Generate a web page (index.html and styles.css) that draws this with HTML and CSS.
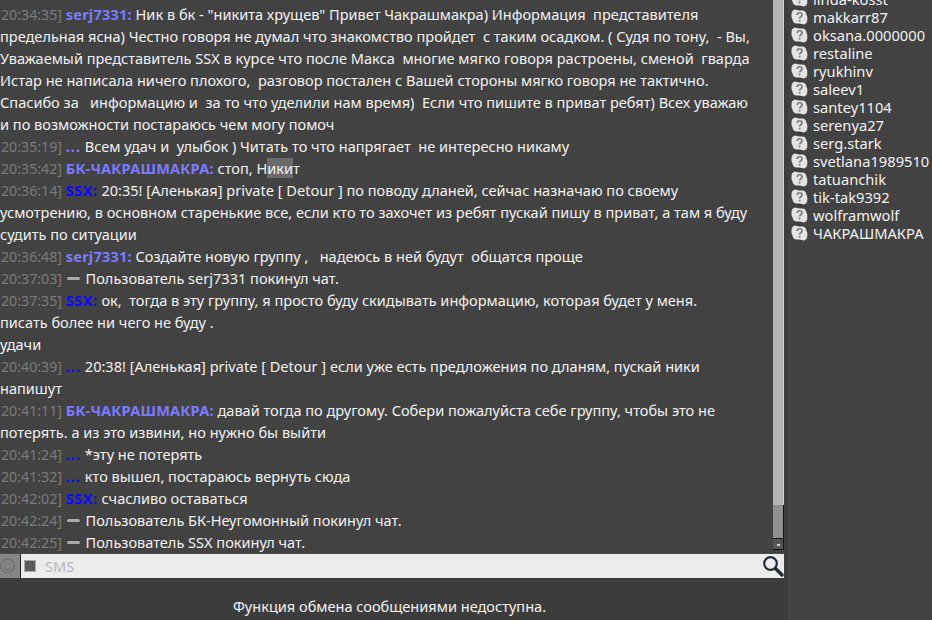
FILE: index.html
```html
<!DOCTYPE html>
<html lang="ru">
<head>
    <meta charset="UTF-8">
    <title>Chat</title>
    <link rel="stylesheet" href="styles.css">
</head>
<body>
    <div class="main">
        <div class="chat-area">
            <div class="messages">
                <div class="msg"><span class="time">20:34:35]</span> <b class="nick-a">serj7331:</b> Ник в бк - "никита хрущев" Привет Чакрашмакра) Информация&nbsp; представителя<br>предельная ясна) Честно говоря не думал что знакомство пройдет&nbsp; с таким осадком. ( Судя по тону,&nbsp; - Вы,<br>Уважаемый представитель SSX в курсе что после Макса&nbsp; многие мягко говоря растроены, сменой&nbsp; гварда<br>Истар не написала ничего плохого,&nbsp; разговор постален с Вашей стороны мягко говоря не тактично.<br>Спасибо за &nbsp;&nbsp;информацию и&nbsp; за то что уделили нам время)&nbsp; Если что пишите в приват ребят) Всех уважаю<br>и по возможности постараюсь чем могу помоч</div>
                <div class="msg"><span class="time">20:35:19]</span> <b class="nick-a dots">...</b> Всем удач и&nbsp; улыбок ) Читать то что напрягает&nbsp; не интересно никаму</div>
                <div class="msg"><span class="time">20:35:42]</span> <b class="nick-a">БК-ЧАКРАШМАКРА:</b> стоп, Н<span class="sel">ики</span>т</div>
                <div class="msg"><span class="time">20:36:14]</span> <b class="nick-b">SSX:</b> 20:35! [Аленькая] private [ Detour ] по поводу дланей, сейчас назначаю по своему<br>усмотрению, в основном старенькие все, если кто то захочет из ребят пускай пишу в приват, а там я буду<br>судить по ситуации</div>
                <div class="msg"><span class="time">20:36:48]</span> <b class="nick-a">serj7331:</b> Создайте новую группу ,&nbsp;&nbsp; надеюсь в ней будут&nbsp; общатся проще</div>
                <div class="msg"><span class="time">20:37:03]</span> <i class="dash"></i> Пользователь serj7331 покинул чат.</div>
                <div class="msg"><span class="time">20:37:35]</span> <b class="nick-b">SSX:</b> ок,&nbsp; тогда в эту группу, я просто буду скидывать информацию, которая будет у меня.<br>писать более ни чего не буду .<br>удачи</div>
                <div class="msg"><span class="time">20:40:39]</span> <b class="nick-b dots">...</b> 20:38! [Аленькая] private [ Detour ] если уже есть предложения по дланям, пускай ники<br>напишут</div>
                <div class="msg"><span class="time">20:41:11]</span> <b class="nick-a">БК-ЧАКРАШМАКРА:</b> давай тогда по другому. Собери пожалуйста себе группу, чтобы это не<br>потерять. а из это извини, но нужно бы выйти</div>
                <div class="msg"><span class="time">20:41:24]</span> <b class="nick-b dots">...</b> *эту не потерять</div>
                <div class="msg"><span class="time">20:41:32]</span> <b class="nick-b dots">...</b> кто вышел, постараюсь вернуть сюда</div>
                <div class="msg"><span class="time">20:42:02]</span> <b class="nick-b">SSX:</b> счасливо оставаться</div>
                <div class="msg"><span class="time">20:42:24]</span> <i class="dash"></i> Пользователь БК-Неугомонный покинул чат.</div>
                <div class="msg"><span class="time">20:42:25]</span> <i class="dash"></i> Пользователь SSX покинул чат.</div>
            </div>
            <div class="scrollbar">
                <div class="thumb"></div>
                <div class="sb-btn"></div>
                <div class="sb-btn small"><i class="sb-mark"></i></div>
            </div>
        </div>
        <div class="input-row">
            <div class="smile">
                <svg width="18" height="18" viewBox="0 0 18 18" fill="none" stroke="#6c6c6c" stroke-width="1.100"><circle cx="7.500" cy="9" r="6.800"/><path d="M4 10.800c1.800 2.800 5.200 2.800 7 0"/><path d="M5 7h1M9 7h1" stroke-width="1.600"/></svg>
            </div>
            <div class="input-box">
                <span class="square"></span>
                <span class="placeholder">SMS</span>
                <svg class="search" width="22" height="22" viewBox="0 0 22 22" fill="none"><circle cx="8.500" cy="8.500" r="6.300" stroke="#232b38" stroke-width="2.200"/><path d="M13.500 13.500l6.500 6.500" stroke="#232b38" stroke-width="3.400" stroke-linecap="round"/></svg>
            </div>
        </div>
        <p class="notice">Функция обмена сообщениями недоступна.</p>
    </div>
    <div class="sidebar">
        <div class="user-list">
            <div class="user"><svg class="q"><use href="#q-icon"/></svg>linda-kosst</div>
            <div class="user"><svg class="q"><use href="#q-icon"/></svg>makkarr87</div>
            <div class="user"><svg class="q"><use href="#q-icon"/></svg>oksana.0000000</div>
            <div class="user"><svg class="q"><use href="#q-icon"/></svg>restaline</div>
            <div class="user"><svg class="q"><use href="#q-icon"/></svg>ryukhinv</div>
            <div class="user"><svg class="q"><use href="#q-icon"/></svg>saleev1</div>
            <div class="user"><svg class="q"><use href="#q-icon"/></svg>santey1104</div>
            <div class="user"><svg class="q"><use href="#q-icon"/></svg>serenya27</div>
            <div class="user"><svg class="q"><use href="#q-icon"/></svg>serg.stark</div>
            <div class="user"><svg class="q"><use href="#q-icon"/></svg>svetlana1989510</div>
            <div class="user"><svg class="q"><use href="#q-icon"/></svg>tatuanchik</div>
            <div class="user"><svg class="q"><use href="#q-icon"/></svg>tik-tak9392</div>
            <div class="user"><svg class="q"><use href="#q-icon"/></svg>wolframwolf</div>
            <div class="user"><svg class="q"><use href="#q-icon"/></svg>ЧАКРАШМАКРА</div>
        </div>
    </div>
    <svg class="defs" width="0" height="0">
        <symbol id="q-icon" viewBox="0 0 16 16">
            <path d="M3.500.5c1.500 0 2.500 1 4 1h3.500c1.800 0 3.200 1.200 3.600 3 .3 1.500 1.200 2.500 1.200 4v2.500c0 2.300-1.500 4.500-3.500 4.500-1.500 0-2.500-1-4-1h-3.300c-1.800 0-3.300-1.200-3.700-3-.3-1.500-1.300-2.500-1.300-4v-2.500c0-2.300 1.500-4.500 3.500-4.500z" fill="#e4e4e4"/>
            <path d="M5.700 6c0-3 4.800-3 4.800 0 0 1.800-2.400 1.800-2.400 3.600M8.100 10.800v1.800" fill="none" stroke="#7c7c7c" stroke-width="1.700"/>
        </symbol>
    </svg>
</body>
</html>
```

FILE: styles.css
```css
html, body {
    height: 100%;
}
body {
    margin: 0;
    width: 932px;
    height: 620px;
    overflow: hidden;
    display: flex;
    background: #3c3c3c;
    color: #f2f2f2;
    font-family: "Noto Sans", sans-serif;
    font-size: 14.55px;
}
.main {
    width: 784px;
    flex: none;
}
.chat-area {
    height: 554px;
    display: flex;
    background: #424242;
    border-bottom: 1px dotted #5a5a5a;
    box-sizing: border-box;
    overflow: hidden;
}
.messages {
    flex: 1;
    min-width: 0;
    padding-top: 3px;
    overflow: hidden;
}
.msg {
    line-height: 22px;
    white-space: nowrap;
}
.time {
    color: #7a7a7a;
    margin-left: 1px;
    font-size: 14.2px;
    line-height: 1;
}
.nick-a {
    color: #7b7bff;
    letter-spacing: .2px;
}
.nick-b {
    color: #0a0aff;
    letter-spacing: .5px;
}
.dots { letter-spacing: 1px; }
.sel { background: #6a6a6a; }
.dash {
    display: inline-block;
    width: 13px;
    height: 3px;
    margin: 0 2px 4px 1px;
    border-radius: 2px;
    background: #aaa;
}
.scrollbar {
    width: 11px;
    height: 550px;
    flex: none;
    display: flex;
    flex-direction: column;
}
.thumb {
    height: 505px;
    flex: none;
    background: #b4b4b4;
    border-right: 1px solid #d0d0d0;
    box-sizing: border-box;
}
.sb-btn {
    height: 34px;
    flex: none;
    background: #909090;
    border-right: 1px solid #111;
    border-bottom: 1px solid #111;
    box-sizing: border-box;
}
.sb-btn.small {
    height: 11px;
    position: relative;
    background: #555;
}
.sb-mark {
    position: absolute;
    left: 4px;
    top: 5px;
    width: 3px;
    height: 2px;
    background: #ccc;
}
.input-row {
    height: 24px;
    display: flex;
}
.smile {
    width: 20px;
    flex: none;
    display: flex;
    align-items: center;
    background: #858585;
    border-right: 1px solid #222;
}
.input-box {
    flex: 1;
    display: flex;
    align-items: center;
    background: #ececec;
    padding-left: 3px;
}
.square {
    width: 10px;
    height: 10px;
    background: #5a5a5a;
    border: 1px solid #aaa;
}
.placeholder {
    flex: 1;
    margin-left: 9px;
    padding-bottom: 1px;
    color: #b8b8b8;
}
.notice {
    margin: 18px 0 0;
    padding-right: 5px;
    text-align: center;
    line-height: 20px;
}
.sidebar {
    flex: 1;
    margin-left: 4px;
    background: #424242;
    overflow: hidden;
}
.user-list {
    margin-top: -10px;
    padding-left: 3px;
}
.user {
    display: flex;
    align-items: center;
    height: 18px;
    line-height: 18px;
    white-space: nowrap;
    font-size: 14.7px;
}
.q {
    width: 17px;
    height: 16px;
    margin-right: 5px;
    flex: none;
}
.defs {
    position: absolute;
}
```
